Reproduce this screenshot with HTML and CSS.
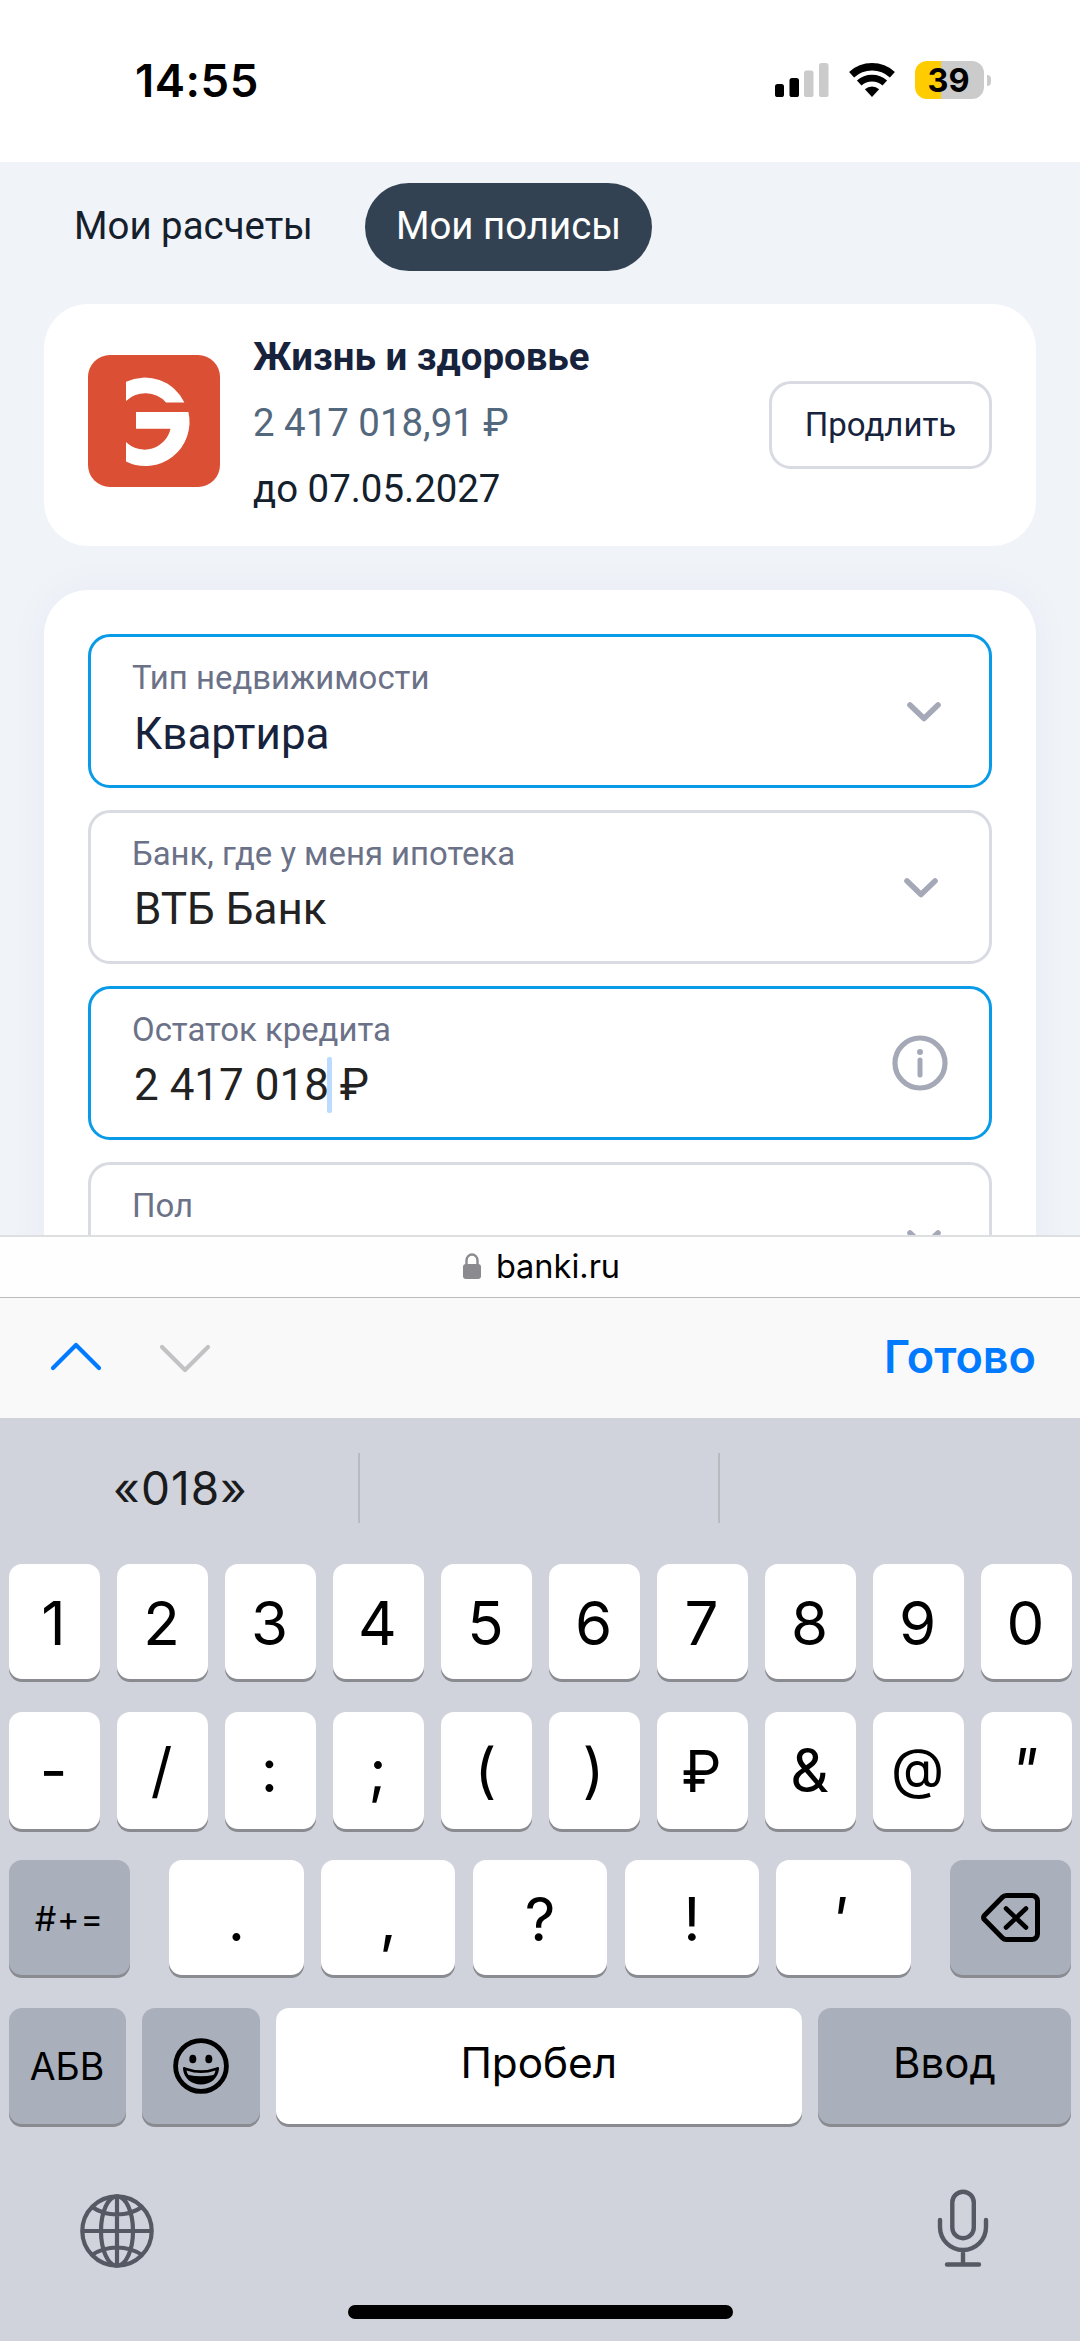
FILE: index.html
```html
<!DOCTYPE html>
<html lang="ru">
<head>
<meta charset="utf-8">
<title>Мои полисы</title>
<link rel="stylesheet" href="styles.css">
</head>
<body>
<div class="phone">
  <header class="status">
    <span class="clock">14:55</span>
    <div class="indicators">
      <svg width="54" height="34" viewBox="0 0 54 34"><rect x="0" y="21" width="9" height="13" rx="2.6"/><rect x="14.5" y="15" width="9.5" height="19" rx="2.6"/><g fill="#cbcbcb"><rect x="29" y="7.5" width="9.5" height="26.5" rx="2.6"/><rect x="44" y="0" width="9.5" height="34" rx="2.6"/></g></svg>
      <svg width="46" height="34" viewBox="0 0 46 34"><g fill="none" stroke="#000" stroke-width="7.4"><path d="M2.6 11.7A30.3 30.3 0 0 1 43.4 11.7"/><path d="M10.2 20A19 19 0 0 1 35.8 20" stroke-width="6.8"/></g><path d="M15.9 26.3A10.5 10.5 0 0 1 30.1 26.3L23 34Z"/></svg>
      <div class="battery"><span class="level">39</span><i class="cap"></i></div>
    </div>
  </header>

  <main class="page">
    <nav class="tabs">
      <a class="tab">Мои расчеты</a>
      <a class="tab active">Мои полисы</a>
    </nav>
    <section class="policy">
      <svg class="logo" viewBox="0 0 132 132"><rect width="132" height="132" rx="22" fill="#db4f34"/><g fill="#fff"><path d="M38 26.8A44 44 0 0 1 96.4 47.4H78A28 28 0 0 0 38 46Z"/><path d="M48 57H100.4A44 44 0 0 1 38 106.4V87A26.5 26.5 0 0 0 82.5 73.7H48Z"/></g></svg>
      <div class="info">
        <b class="name">Жизнь и здоровье</b>
        <span class="sum">2 417 018,91 ₽</span>
        <span class="until">до 07.05.2027</span>
      </div>
      <button class="renew">Продлить</button>
    </section>
    <section class="form">
      <div class="field focus">
        <div class="text"><label>Тип недвижимости</label><span class="value navy">Квартира</span></div>
        <svg class="chev near" viewBox="0 0 34 20"><path d="M3 3L17 16.5L31 3"/></svg>
      </div>
      <div class="field">
        <div class="text"><label>Банк, где у меня ипотека</label><span class="value">ВТБ Банк</span></div>
        <svg class="chev" viewBox="0 0 34 20"><path d="M3 3L17 16.5L31 3"/></svg>
      </div>
      <div class="field focus">
        <div class="text"><label>Остаток кредита</label><span class="value">2 417 018<i class="caret"></i> ₽</span></div>
        <svg class="hint" viewBox="0 0 56 56"><circle cx="28" cy="28" r="25" fill="none" stroke="#a5a9b7" stroke-width="5.2"/><circle cx="28" cy="17" r="3" fill="#a5a9b7"/><path d="M28 25V40" stroke="#a5a9b7" stroke-width="5" stroke-linecap="round"/></svg>
      </div>
      <div class="field">
        <div class="text"><label>Пол</label></div>
        <svg class="chev near" viewBox="0 0 34 20"><path d="M3 3L17 16.5L31 3"/></svg>
      </div>
    </section>
  </main>

  <div class="address">
    <svg width="18" height="26" viewBox="0 0 18 26"><rect y="11" width="18" height="15" rx="3" fill="#8a8a8f"/><path d="M3.5 12V7.5a5.5 6 0 0 1 11 0V12" fill="none" stroke="#8a8a8f" stroke-width="2.4"/></svg>
    <span>banki.ru</span>
  </div>

  <div class="assist">
    <svg class="up" width="52" height="29" viewBox="0 0 52 29"><path d="M3 26L26 3L49 26"/></svg>
    <svg class="down" width="52" height="29" viewBox="0 0 52 29"><path d="M3 3L26 26L49 3"/></svg>
    <span class="done">Готово</span>
  </div>

  <div class="keyboard">
    <div class="suggest"><span>«018»</span><span></span><span></span></div>
    <div class="row ten">
      <kbd>1</kbd><kbd>2</kbd><kbd>3</kbd><kbd>4</kbd><kbd>5</kbd><kbd>6</kbd><kbd>7</kbd><kbd>8</kbd><kbd>9</kbd><kbd>0</kbd>
    </div>
    <div class="row ten signs">
      <kbd>-</kbd><kbd>/</kbd><kbd>:</kbd><kbd>;</kbd><kbd>(</kbd><kbd>)</kbd><kbd class="rub">₽</kbd><kbd>&amp;</kbd><kbd class="at">@</kbd><kbd class="slant">"</kbd>
    </div>
    <div class="row punct">
      <kbd class="gray small">#+=</kbd>
      <div class="marks"><kbd>.</kbd><kbd>,</kbd><kbd>?</kbd><kbd>!</kbd><kbd class="slant">'</kbd></div>
      <kbd class="gray"><svg width="59" height="49" viewBox="0 0 59 49"><g fill="none" stroke="#000" stroke-width="5" stroke-linecap="round" stroke-linejoin="round"><path d="M25.500 2.500H51a5.500 5.500 0 0 1 5.500 5.500V41a5.500 5.500 0 0 1-5.500 5.500H25.500a6 6 0 0 1-4.200-1.800L3.400 26.600a3 3 0 0 1 0-4.200L21.300 4.300a6 6 0 0 1 4.200-1.800Z"/><path d="M25 15.500L45 34.500M45 15.500L25 34.500" stroke-width="4.600"/></g></svg></kbd>
    </div>
    <div class="row bottom">
      <kbd class="gray abc">АБВ</kbd>
      <kbd class="gray"><svg width="56" height="56" viewBox="0 0 56 56"><circle cx="28" cy="28" r="25.400" fill="none" stroke="#000" stroke-width="4.800"/><ellipse cx="19.800" cy="21" rx="3.500" ry="4.300"/><ellipse cx="35.800" cy="21" rx="3.500" ry="4.300"/><path d="M10 31C9.800 29 11 28.800 12.500 29.400Q28 35 43.500 29.400C45 28.800 46.200 29 46 31C45 40 38 46.500 28 46.500S11 40 10 31Z"/><path d="M13.500 32.500Q28 37.500 42.500 32.500Q42 35.500 40.500 37Q28 39.500 15.500 37Q14 35.500 13.500 32.500Z" fill="#a9afbb"/></svg></kbd>
      <kbd class="word">Пробел</kbd>
      <kbd class="gray word">Ввод</kbd>
    </div>
    <div class="system">
      <svg class="globe" width="76" height="76" viewBox="0 0 76 76"><g fill="none" stroke="#545963" stroke-width="4.200"><circle cx="38" cy="38" r="34.700"/><ellipse cx="38" cy="38" rx="16" ry="34.700"/><path d="M38 3V73M3 38H73M13 14Q24 21.500 38 21.500T63 14M13 62Q24 54.500 38 54.500T63 62"/></g></svg>
      <svg width="54" height="78" viewBox="0 0 54 78"><g fill="none" stroke="#545963" stroke-width="4.400" stroke-linecap="round"><rect x="16.300" y="2.700" width="21.500" height="46.500" rx="10.750"/><path d="M4 31V38A23 23 0 0 0 50 38V31M27 61V75M11 75.500H43"/></g></svg>
    </div>
    <div class="home"></div>
  </div>
</div>
</body>
</html>
```
FILE: styles.css
```css
* { box-sizing: border-box; }
body { margin: 0; background: #fff; }
svg { display: block; flex: none; }

.phone {
  width: 1080px;
  height: 2341px;
  display: flex;
  flex-direction: column;
  overflow: hidden;
  font-family: Inter, "Liberation Sans", sans-serif;
  color: #000;
}

/* status bar */
.status {
  height: 162px;
  flex: none;
  display: flex;
  justify-content: space-between;
  padding: 61px 96px 0 135px;
}
.clock { font-size: 45.5px; line-height: 40px; font-weight: 600; letter-spacing: .5px; }
.indicators { display: flex; align-items: center; height: 38px; }
.indicators svg + svg { margin-left: 20px; }
.battery {
  position: relative;
  width: 69px;
  height: 38px;
  margin-left: 20px;
  border-radius: 12px;
  background: linear-gradient(90deg, #fc0 26.5px, #cbcbcb 26.5px);
  text-align: center;
}
.level { font-size: 32.5px; line-height: 39px; font-weight: 700; margin-left: -2px; }
.cap {
  position: absolute;
  left: 72px;
  top: 14px;
  width: 4px;
  height: 11px;
  border-radius: 0 5px 5px 0;
  background: #cbcbcb;
}

/* web page */
.page {
  height: 1073px;
  flex: none;
  overflow: hidden;
  padding: 21px 44px 0;
  background: #f0f3f8;
  font-family: Roboto, "Liberation Sans", sans-serif;
}
.tabs { display: flex; gap: 21px; margin-left: -1px; }
.tab {
  height: 88px;
  padding: 0 31px;
  border-radius: 44px;
  font-size: 38.4px;
  line-height: 86px;
  color: #14202b;
  white-space: nowrap;
}
.tab.active { background: #334252; color: #fff; }

.policy {
  height: 242px;
  margin-top: 33px;
  padding: 0 44px;
  border-radius: 44px;
  background: #fff;
  display: flex;
  align-items: center;
}
.logo { width: 132px; height: 132px; margin-top: -8px; }
.info {
  flex: 1;
  margin: -4px 0 0 33px;
  display: flex;
  flex-direction: column;
  font-size: 38.4px;
  line-height: 66px;
}
.name { color: #17233c; }
.sum { color: #53677d; }
.until { color: #14202b; }
.renew {
  width: 223px;
  height: 88px;
  padding: 0;
  border: 3px solid #d9dbe3;
  border-radius: 22px;
  background: #fff;
  font: 33px/82px Roboto, sans-serif;
  color: #17233c;
}

.form {
  height: 800px;
  margin-top: 44px;
  padding: 44px 44px 0;
  border-radius: 44px;
  background: #fff;
  box-shadow: 0 0 44px rgba(30, 50, 90, .04);
  display: flex;
  flex-direction: column;
  gap: 22px;
}
.field {
  height: 154px;
  flex: none;
  border: 3px solid #d9dbe3;
  border-radius: 22px;
  padding: 19px 41px 0;
  display: flex;
  justify-content: space-between;
}
.field.focus { border-color: #0a9be8; }
.text { display: flex; flex-direction: column; }
.text label { font-size: 32.9px; line-height: 44px; color: #6b7288; }
.value { position: relative; font-size: 44px; line-height: 67px; color: #222; margin-left: 2px; white-space: nowrap; }
.value.navy { color: #17233c; line-height: 69px; }
.caret {
  position: absolute;
  left: 193px;
  top: 5px;
  width: 5px;
  height: 56px;
  border-radius: 2px;
  background: #bbdbff;
}
.chev { width: 34px; height: 20px; margin: 46px 10px 0 0; fill: none; stroke: #a5a9b7; stroke-width: 5.6; stroke-linecap: round; stroke-linejoin: round; }
.chev.near { margin-right: 7.5px; }
.hint { width: 56px; height: 56px; margin-top: 27px; }

/* browser address strip */
.address {
  height: 63px;
  flex: none;
  border-top: 2px solid #dedfe1;
  border-bottom: 1px solid #bcbcbe;
  background: #fefefe;
  display: flex;
  justify-content: center;
  align-items: center;
  gap: 15px;
  padding: 0 0 2px 3px;
  font-size: 32.5px;
}

/* form assistant */
.assist {
  height: 120px;
  flex: none;
  background: #f9f9f9;
  display: flex;
  align-items: center;
  padding: 0 44px 0 50px;
}
.assist svg { fill: none; stroke-width: 4.2; stroke-linecap: round; stroke-linejoin: round; }
.up { stroke: #007aff; margin-top: -4px; }
.down { stroke: #c2c2c4; margin-left: 57px; }
.done { margin: -3px 0 0 auto; font-size: 45px; font-weight: 600; color: #007aff; }

/* keyboard */
.keyboard {
  flex: 1;
  background: #d0d3db;
  padding: 35px 8.5px 0;
  display: flex;
  flex-direction: column;
}
.suggest { display: grid; grid-template-columns: 351px 360px 1fr; height: 69px; margin-bottom: 41.5px; }
.suggest span { font-size: 46px; line-height: 70px; text-align: center; letter-spacing: 1px; color: #1a1b1d; padding-right: 5px; border-right: 2px solid #b9bbc0; }
.suggest span:last-child { border: 0; }
.row { display: flex; gap: 17px; margin-bottom: 33px; height: 115.300px; flex: none; }
kbd {
  font: 400 60px/112px Inter, sans-serif;
  background: #fff;
  border-radius: 13px;
  box-shadow: 0 3px 0 #898b90;
  display: flex;
  align-items: center;
  justify-content: center;
}
.ten { display: grid; grid-template-columns: repeat(10, minmax(0, 1fr)); }
.ten kbd { padding: 3px 1px 0 0; }
.signs kbd { padding-top: 0; }
.signs .rub { padding-top: 3px; font-size: 57px; }
.signs .at { padding-bottom: 5px; font-size: 55px; }
.slant { font-style: italic; }
.signs .slant { padding-right: 4px; }
.marks .slant { padding-right: 10px; }
.gray { background: #a9afbb; }
.punct { justify-content: space-between; }
.punct > kbd { width: 121.500px; }
.marks { display: flex; gap: 17.500px; }
.marks kbd { width: 134.300px; padding-top: 2px; }
.punct .small { font-size: 34px; letter-spacing: .8px; padding: 2px 0 0; }
.bottom kbd { width: 118px; flex: none; }
.bottom .abc { width: 117px; font-size: 37.5px; padding-top: 2px; }
.bottom { gap: 16px; }
.bottom .word { width: 526.500px; font-size: 42.3px; padding-bottom: 6px; }
.bottom .gray.word { width: 253px; font-size: 42px; }
.system { display: flex; justify-content: space-between; align-items: center; height: 78px; margin-top: 32px; padding: 0 82px 0 70px; }
.globe { margin-top: 7px; }
.home { width: 385px; height: 14px; border-radius: 7px; background: #000; margin: 38.5px auto 0; }
```
